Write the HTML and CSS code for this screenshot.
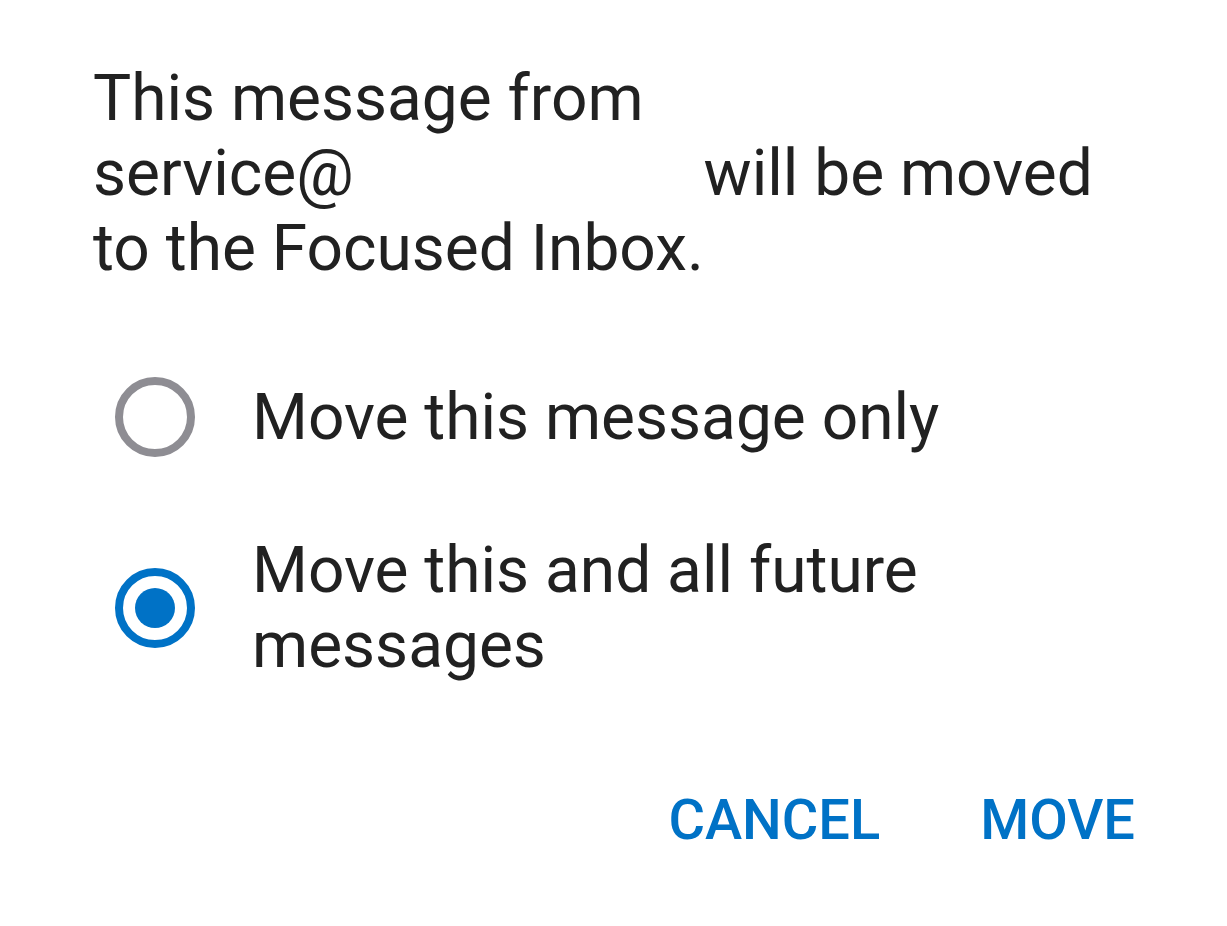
FILE: index.html
```html
<!DOCTYPE html>
<html lang="en">
<head>
<meta charset="utf-8">
<title>Move to Focused Inbox</title>
<link rel="stylesheet" href="styles.css">
</head>
<body>
<div class="dialog">
  <p class="message">This message from<br>service@<span class="redacted"></span> will be moved<br>to the Focused Inbox.</p>
  <div class="options">
    <label class="option">
      <span class="radio"></span>
      <span class="option-text">Move this message only</span>
    </label>
    <label class="option">
      <span class="radio checked"></span>
      <span class="option-text">Move this and all future<br>messages</span>
    </label>
  </div>
  <div class="actions">
    <button class="btn">CANCEL</button>
    <button class="btn">MOVE</button>
  </div>
</div>
</body>
</html>
```
FILE: styles.css
```css
html, body {
  margin: 0;
  padding: 0;
  background: #ffffff;
}
body {
  font-family: Roboto, "Noto Sans", sans-serif;
  color: #212121;
}
.dialog {
  width: 1227px;
  height: 926px;
  box-sizing: border-box;
  padding: 61px 92px 0 93px;
}
.message {
  margin: 0;
  font-size: 64px;
  line-height: 75px;
}
.redacted {
  display: inline-block;
  width: 334px;
  height: 1px;
}
.options {
  display: flex;
  flex-direction: column;
  gap: 76px;
  margin-top: 91px;
  padding-left: 22px;
}
.option {
  display: flex;
  align-items: center;
  gap: 57px;
}
.radio {
  flex: none;
  width: 80px;
  height: 80px;
  box-sizing: border-box;
  border: 8px solid #8e8d93;
  border-radius: 50%;
  display: flex;
  align-items: center;
  justify-content: center;
}
.radio.checked {
  border-color: #0072c6;
}
.radio.checked::after {
  content: "";
  width: 40px;
  height: 40px;
  border-radius: 50%;
  background: #0072c6;
}
.option-text {
  font-size: 64px;
  line-height: 75px;
}
.actions {
  display: flex;
  justify-content: flex-end;
  gap: 100px;
  margin-top: 102px;
}
.btn {
  border: 0;
  background: none;
  padding: 0;
  font-family: Roboto, "Noto Sans", sans-serif;
  font-weight: 500;
  font-size: 56px;
  line-height: 70px;
  color: #0072c6;
}
```
